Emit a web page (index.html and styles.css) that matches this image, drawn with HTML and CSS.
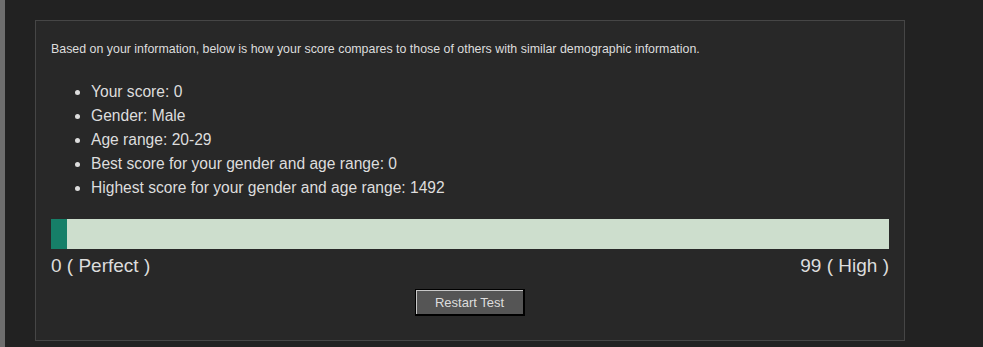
FILE: index.html
```html
<!DOCTYPE html>
<html lang="en">

<head>
    <meta charset="UTF-8">
    <title>Your Score</title>
    <link rel="stylesheet" href="styles.css">
</head>

<body>
    <div class="panel">
        <p class="intro">Based on your information, below is how your score compares to those of others with similar demographic information.</p>
        <ul class="stats">
            <li>Your score: 0</li>
            <li>Gender: Male</li>
            <li>Age range: 20-29</li>
            <li>Best score for your gender and age range: 0</li>
            <li>Highest score for your gender and age range: 1492</li>
        </ul>
        <!-- 分数条 -->
        <div class="score-bar">
            <div class="score-fill" style="width: 16px;"></div>
        </div>
        <div class="score-labels">
            <span>0 ( Perfect )</span>
            <span>99 ( High )</span>
        </div>
        <div class="actions">
            <button type="button" class="restart">Restart Test</button>
        </div>
    </div>
</body>

</html>
```

FILE: styles.css
```css
body {
    margin: 0;
    height: 347px;
    background: #222222;
    border-left: 5px solid #6e6e6e;
    font-family: "Liberation Sans", Arial, sans-serif;
    color: #dddddd;
}

/* 外层面板 */
.panel {
    margin: 20px 0 0 30px;
    width: 838px;
    height: 289px;
    padding: 15px;
    background: #282828;
    border: 1px solid #464646;
}

.intro {
    font-size: 12.4px;
    line-height: 14px;
    margin: 6px 0 0;
}

.stats {
    font-size: 15.6px;
    line-height: 24px;
    margin: 24px 0 0;
    padding-left: 40px;
}

.score-bar {
    margin-top: 19px;
    height: 30px;
    background: #cddecd;
}

.score-fill {
    height: 100%;
    background: #167f68;
}

.score-labels {
    display: flex;
    justify-content: space-between;
    font-size: 19px;
    line-height: 22px;
    margin-top: 6px;
}

.actions {
    display: flex;
    justify-content: center;
    margin-top: 12px;
}

.restart {
    width: 110px;
    height: 27px;
    padding: 0;
    font-family: "Liberation Sans", Arial, sans-serif;
    font-size: 13px;
    color: #dddddd;
    background: #555555;
    border: 1px solid #000000;
    border-right-width: 2px;
    border-bottom-width: 2px;
    box-shadow: inset 1px 1px 0 #c8c8c8;
}
```
